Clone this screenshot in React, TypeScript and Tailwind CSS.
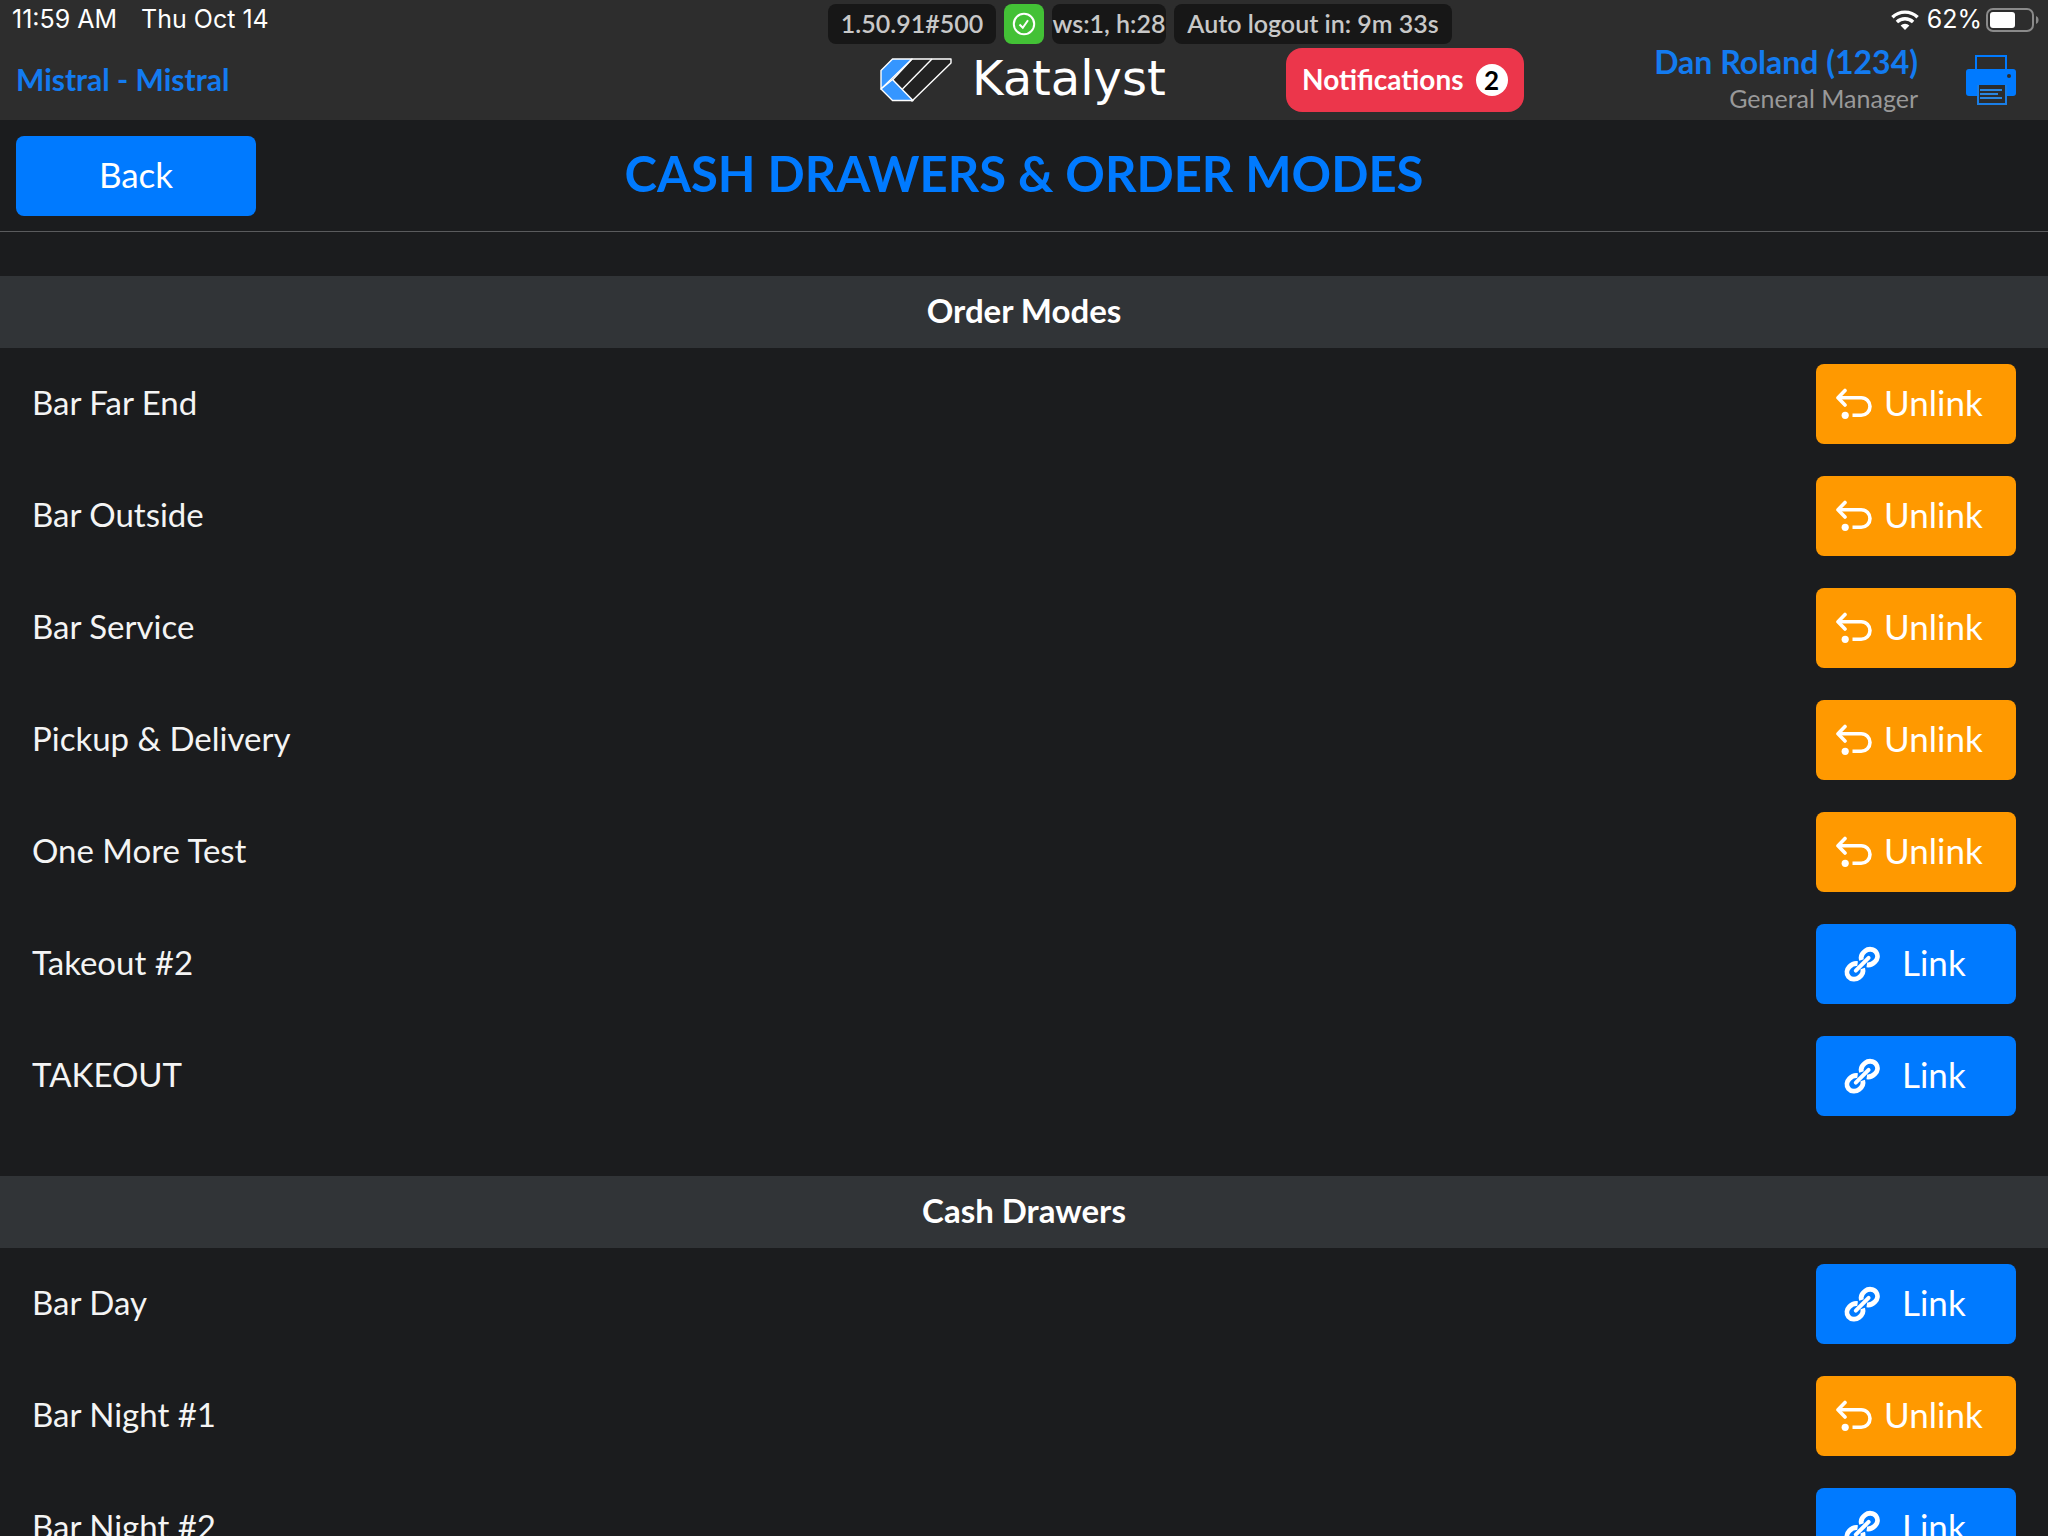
import clsx from "clsx";

type Item = {
  name: string;
  linked: boolean;
};

const orderModes: Item[] = [
  { name: "Bar Far End", linked: true },
  { name: "Bar Outside", linked: true },
  { name: "Bar Service", linked: true },
  { name: "Pickup & Delivery", linked: true },
  { name: "One More Test", linked: true },
  { name: "Takeout #2", linked: false },
  { name: "TAKEOUT", linked: false },
];

const cashDrawers: Item[] = [
  { name: "Bar Day", linked: false },
  { name: "Bar Night #1", linked: true },
  { name: "Bar Night #2", linked: false },
];

const UnlinkIcon = () => (
  <svg className="w-9 h-8" viewBox="0 0 36 32" fill="none" stroke="currentColor" strokeWidth="3.6" strokeLinecap="round" strokeLinejoin="round" aria-hidden="true">
    <path d="M9 2.5 2 9.7 9 17" />
    <path d="M3 9.7H25.2a8.8 8.8 0 0 1 0 17.6H16.5" strokeLinecap="butt" />
    <circle cx="9.2" cy="27.3" r="3.6" fill="currentColor" stroke="none" />
  </svg>
);

const LinkIcon = () => (
  <svg className="w-9 h-9" viewBox="0 0 36 36" fill="none" stroke="currentColor" strokeWidth="4.8" aria-hidden="true">
    <path d="M17.5 14C16.4 10.5 18.2 7.2 21 5.1C24.4 2.4 29.5 2.7 32 5.9C34.4 9.1 33.6 13.2 31 15.8C29 17.8 26.2 19.4 22.8 18.9" />
    <path d="M13.6 17.6C10.2 17.1 7.4 18.7 5.4 20.7C2.7 23.4 2 27.6 4.5 30.7C7.1 33.8 12 34 15.2 31.4C18 29.1 19.8 26 18.7 22.5" />
    <path d="M11.8 24.6 24.6 11.9" strokeWidth="4" strokeLinecap="round" />
  </svg>
);

const WifiIcon = () => (
  <svg className="w-7 h-5" viewBox="0 0 28 20" fill="none" stroke="currentColor" strokeWidth="3.4" aria-hidden="true">
    <path d="M1.4 7.3a18 18 0 0 1 25.2 0" />
    <path d="M5.9 12a11.7 11.7 0 0 1 16.2 0" />
    <path d="M14 20 9.6 15.6a6.3 6.3 0 0 1 8.8 0Z" fill="currentColor" stroke="none" />
  </svg>
);

const BatteryIcon = () => (
  <svg className="w-[54px] h-6" viewBox="0 0 54 24" aria-hidden="true">
    <rect x="1" y="1" width="46" height="22" rx="6" fill="none" stroke="#8a8a8a" strokeWidth="2" />
    <rect x="4" y="4" width="25" height="16" rx="3" fill="white" />
    <path d="M50 8c3.4 1.2 3.4 6.8 0 8Z" fill="#8a8a8a" />
  </svg>
);

const PrinterIcon = () => (
  <svg className="w-[50px] h-[50px]" viewBox="0 0 50 50" aria-hidden="true">
    <rect x="10" y="1" width="30" height="18" fill="none" stroke="#007aff" strokeWidth="2" />
    <rect y="14" width="50" height="27" rx="3" fill="#007aff" />
    <circle cx="43" cy="21" r="2" fill="#2c2c2c" />
    <rect x="11" y="30" width="28" height="19" fill="#2c2c2c" />
    <path d="M12 30V49H40V30" fill="none" stroke="#1a7ee6" strokeWidth="2" />
    <path d="M14 35H36M14 39H32M14 43H36" stroke="#2a86e0" strokeWidth="2" />
  </svg>
);

const Logo = () => (
  <div className="flex items-center gap-5 w-72 h-12">
    <svg className="w-[72px] h-11 shrink-0" viewBox="0 0 72 44" stroke="white" strokeWidth="1.4" strokeLinejoin="round" aria-hidden="true">
      <path d="M32 1H71V5L32 43 12.5 22Z" fill="#222" />
      <path d="M12.5 1H32L1 31V12.5Z" fill="#3596ff" />
      <path d="M12.5 21.5 33 42.5H12.5L1 31Z" fill="#3596ff" />
      <path d="M52 1 22.5 31" fill="none" />
    </svg>
    <span className="pb-1 font-['DejaVu_Sans',sans-serif] text-[48px] leading-12 text-white">Katalyst</span>
  </div>
);

const CheckCircle = () => (
  <svg className="w-6 h-6" viewBox="0 0 24 24" fill="none" stroke="white" strokeWidth="2" aria-hidden="true">
    <circle cx="12" cy="12" r="10.2" />
    <path d="M7.5 12.5 10.8 15.8 16 8.2" />
  </svg>
);

const Pill = ({ children, className }: { children: string; className?: string }) => (
  <span className={clsx("flex items-center justify-center h-10 rounded-lg bg-[#171717] text-[25px] font-semibold text-[#c8c8c8] whitespace-nowrap", className)}>
    {children}
  </span>
);

const Header = () => (
  <header className="h-[120px] shrink-0 bg-[#2d2d2d]">
    <div className="grid grid-cols-[1fr_auto_1fr] gap-2 h-11 pt-1">
      <div className="flex justify-between">
        <div className="flex gap-6 pl-3 h-8 items-center font-['Inter',sans-serif] text-[25px] text-white">
          <span>11:59 AM</span>
          <span>Thu Oct 14</span>
        </div>
        <Pill className="w-[168px]">1.50.91#500</Pill>
      </div>
      <div className="flex items-center justify-center w-10 h-10 rounded-lg bg-[#43c136]">
        <CheckCircle />
      </div>
      <div className="flex justify-between">
        <div className="flex gap-2">
          <Pill className="w-[114px]">ws:1, h:28</Pill>
          <Pill className="w-[278px]">Auto logout in: 9m 33s</Pill>
        </div>
        <div className="flex items-center h-8 pr-2 font-['Inter',sans-serif] text-[25px] text-white">
          <WifiIcon />
          <span className="ml-2 mr-1">62%</span>
          <BatteryIcon />
        </div>
      </div>
    </div>

    <div className="grid grid-cols-[1fr_auto_1fr] items-center h-[72px] px-4">
      <a href="#" className="pb-0.5 text-[30px] font-bold text-[#137bf0]">Mistral - Mistral</a>
      <Logo />
      <div className="flex items-center justify-between pl-[118px]">
        <button className="flex items-center gap-3 h-16 px-4 rounded-2xl bg-[#ec364b] text-[28px] font-bold text-white">
          <span className="pb-0.5">Notifications</span>
          <span className="flex items-center justify-center size-8 rounded-full bg-white text-[26px] leading-8 text-black">2</span>
        </button>
        <div className="flex items-center gap-12 pr-4">
          <div className="flex flex-col text-right">
            <a href="#" className="text-[32px] leading-9 font-bold text-[#137bf0]">Dan Roland (1234)</a>
            <span className="text-[25px] leading-9 text-[#999]">General Manager</span>
          </div>
          <button aria-label="Printer">
            <PrinterIcon />
          </button>
        </div>
      </div>
    </div>
  </header>
);

const ItemRow = ({ item }: { item: Item }) => (
  <li className="flex items-center justify-between h-28 px-8">
    <span className="pb-0.5 text-[33px] text-[#f4f4f4]">{item.name}</span>
    <button
      className={clsx(
        "flex items-center w-[200px] h-20 rounded-lg text-[35px] text-white",
        item.linked ? "gap-3 pl-5 bg-[#ff9900]" : "gap-5.5 pl-7 bg-[#007aff]"
      )}
    >
      {item.linked ? <UnlinkIcon /> : <LinkIcon />}
      <span className="pb-1">{item.linked ? "Unlink" : "Link"}</span>
    </button>
  </li>
);

const Section = ({ title, items }: { title: string; items: Item[] }) => (
  <section className="pt-11">
    <h2 className="flex items-center justify-center h-[72px] pb-0.5 bg-[#313437] text-[33px] font-bold text-white">{title}</h2>
    <ul>
      {items.map((item) => (
        <ItemRow key={item.name} item={item} />
      ))}
    </ul>
  </section>
);

const App = () => (
  <div className="flex flex-col h-screen overflow-hidden bg-[#1b1c1e] font-['Lato',sans-serif]">
    <Header />
    <div className="grid grid-cols-[1fr_auto_1fr] items-center h-28 shrink-0 px-4 border-b border-[#5a5b5d]">
      <button className="w-60 h-20 pb-0.5 rounded-lg bg-[#007aff] text-[35px] text-white">Back</button>
      <h1 className="pb-1 text-[49px] font-bold text-[#007aff]">CASH DRAWERS & ORDER MODES</h1>
    </div>
    <main className="flex-1 overflow-y-auto [scrollbar-width:none]">
      <Section title="Order Modes" items={orderModes} />
      <Section title="Cash Drawers" items={cashDrawers} />
    </main>
  </div>
);

export default App;
